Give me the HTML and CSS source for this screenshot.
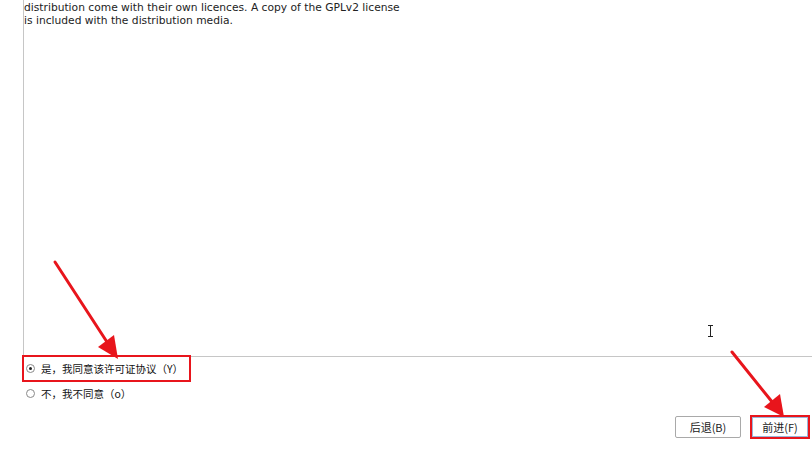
FILE: index.html
```html
<!DOCTYPE html>
<html lang="zh">
<head>
<meta charset="utf-8">
<link rel="stylesheet" href="styles.css">
</head>
<body>
<div class="page">
  <div class="license">
    <p class="text">distribution come with their own licences. A copy of the GPLv2 license<br>is included with the distribution media.</p>
  </div>
  <div class="choices">
    <label class="choice choice-marked"><span class="radio radio-on"></span><span class="label">是，我同意该许可证协议（Y）</span></label>
    <label class="choice"><span class="radio"></span><span class="label">不，我不同意（o）</span></label>
  </div>
  <div class="buttons">
    <button class="btn">后退(B)</button>
    <span class="btn-mark"><button class="btn btn-default">前进(F)</button></span>
  </div>
  <svg class="overlay" width="812" height="451" viewBox="0 0 812 451">
    <g stroke="#e8151c" stroke-width="3" stroke-linecap="round">
      <line x1="55" y1="262" x2="107" y2="342"/>
      <line x1="732" y1="352" x2="773" y2="403"/>
    </g>
    <g fill="#e8151c">
      <polygon points="118,359 98,347 114,335"/>
      <polygon points="784,417 764,407 780,394"/>
    </g>
    <g stroke="#222" stroke-width="1" fill="none">
      <line x1="710.5" y1="326" x2="710.5" y2="336"/>
      <line x1="708" y1="325.5" x2="713" y2="325.5"/>
      <line x1="708" y1="336.5" x2="713" y2="336.5"/>
    </g>
  </svg>
</div>
</body>
</html>
```

FILE: styles.css
```css
html, body {
  margin: 0;
  padding: 0;
  background: #ffffff;
}
.page {
  position: relative;
  width: 812px;
  height: 451px;
  overflow: hidden;
  font-family: "DejaVu Sans", "Noto Sans CJK SC", sans-serif;
  color: #222;
}
.license {
  margin-left: 23px;
  height: 357px;
  box-sizing: border-box;
  border-left: 1px solid #c6c6c6;
  border-bottom: 1px solid #c6c6c6;
}
.text {
  margin: 0;
  padding: 0;
  font-size: 10.7px;
  line-height: 13px;
  position: relative;
  top: 1px;
}
.choices {
  display: flex;
  flex-direction: column;
  padding-left: 22px;
  margin-top: -2px;
}
.choice {
  display: flex;
  align-items: center;
  gap: 6px;
  height: 22px;
  padding-left: 4px;
  font-family: "Noto Sans CJK SC", sans-serif;
  font-size: 10.5px;
  color: #111;
  box-sizing: border-box;
}
.choice-marked {
  width: 169px;
  height: 27px;
  border: 2px solid #e8151c;
  padding-left: 2px;
}
.radio {
  width: 9px;
  height: 9px;
  border: 1px solid #8a8a8a;
  border-radius: 50%;
  box-sizing: border-box;
  display: flex;
  align-items: center;
  justify-content: center;
  background: #fff;
}
.radio-on::after {
  content: "";
  width: 3px;
  height: 3px;
  border-radius: 50%;
  background: #222;
}
.buttons {
  display: flex;
  justify-content: flex-end;
  align-items: center;
  gap: 9px;
  padding-right: 2px;
  margin-top: 11px;
}
.btn {
  height: 22px;
  width: 66px;
  border: 1px solid #a9a9a9;
  border-radius: 2px;
  background: #fff;
  font-family: "Noto Sans CJK SC", sans-serif;
  font-size: 11px;
  color: #222;
  padding: 0;
}
.btn-mark {
  display: flex;
  border: 2px solid #e8151c;
}
.btn-default {
  width: 56px;
  height: 20px;
  border: 1px solid #9ab6d9;
  border-radius: 0;
}
.overlay {
  position: absolute;
  left: 0;
  top: 0;
  pointer-events: none;
}
```
